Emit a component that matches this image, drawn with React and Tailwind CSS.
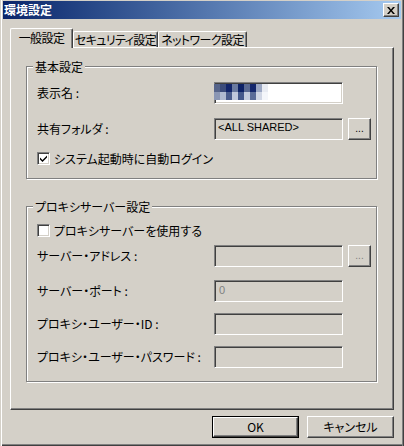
import React from "react";

const font =
  "font-['Noto_Sans_CJK_JP',sans-serif] [font-feature-settings:'palt']";
const sunken =
  "border border-t-[#808080] border-l-[#808080] border-b-white border-r-white shadow-[inset_1px_1px_#404040,inset_-1px_-1px_#d4d0c8]";
const raised =
  "border border-t-white border-l-white border-b-[#404040] border-r-[#404040] shadow-[inset_-1px_-1px_#808080]";
const etched =
  "relative border border-[#808080] shadow-[inset_1px_1px_#fff,1px_1px_#fff]";

const blur = [
  ["#56648a", "#3b4b7a", "#11246a", "#6a7aa0", "#0d2266", "#5a6a92", "#14276c", "#9aa6c2", "#e8ebf2"],
  ["#8a96b4", "#b0bad0", "#4a5c8c", "#c0c8dc", "#44588a", "#c4ccdd", "#5a6c98", "#d0d6e4", "#f4f6fa"],
];

const Field = ({ white, children }) => (
  <div
    className={`w-[129px] h-[22px] ${sunken} ${white ? "bg-white" : "bg-[#d4d0c8]"}`}
  >
    {children}
  </div>
);

const Dots = ({ disabled }) => (
  <button
    className={`ml-[5px] w-[23px] h-[22px] ${raised} bg-[#d4d0c8] flex items-end justify-center pb-[5px] font-['Liberation_Sans',sans-serif] text-[10px] leading-none ${disabled ? "text-[#808080]" : "text-black"}`}
  >
    ...
  </button>
);

const Row = ({ label, className, children }) => (
  <div className={`flex items-center h-[22px] ${className}`}>
    <span className="w-[177px] leading-none whitespace-nowrap">{label}</span>
    {children}
  </div>
);

const Check = ({ checked, label, className }) => (
  <div className={`flex items-center h-[13px] ${className}`}>
    <div
      className={`w-[13px] h-[13px] bg-white ${sunken} flex items-center justify-center`}
    >
      {checked && (
        <svg width="7" height="7" viewBox="0 0 7 7">
          <path d="M0 2.5 L2.5 5 L7 0.5 L7 2.5 L2.5 7 L0 4.5 Z" fill="#000" />
        </svg>
      )}
    </div>
    <span className="ml-[4px] leading-none whitespace-nowrap">{label}</span>
  </div>
);

const Group = ({ title, className, children }) => (
  <div className={`${etched} w-[351px] ${className}`}>
    <span className="absolute -top-[7px] left-[6px] px-[2px] bg-[#d4d0c8] leading-[13px] whitespace-nowrap">
      {title}
    </span>
    <div className="pl-[10px]">{children}</div>
  </div>
);

const Tab = ({ active, className, children }) => (
  <div
    className={`${className} shrink-0 whitespace-nowrap tracking-[-0.6px] flex items-center justify-center leading-none bg-[#d4d0c8] rounded-t-[2px] border-t border-l border-t-white border-l-white border-r border-r-[#404040] shadow-[inset_-1px_0_#808080] ${
      active ? "relative z-10 h-[20px] -mb-[1px] pb-[2px]" : "h-[16px]"
    }`}
  >
    {children}
  </div>
);

export default function App() {
  return (
    <div
      className={`w-[404px] h-[446px] bg-[#d4d0c8] flex flex-col text-[12px] text-black ${font} shadow-[inset_1px_0_#d4d0c8,inset_2px_0_#fff,inset_-1px_0_#404040,inset_-2px_0_#808080,inset_0_-1px_#404040,inset_0_-2px_#808080]`}
    >
      {/* Title bar */}
      <div className="mt-[1px] mx-[3px] h-[18px] flex items-center justify-between bg-linear-to-r from-[#0a246a] to-[#a6caf0] pl-[1px] pr-[2px]">
        <span className="text-white font-bold leading-none">環境設定</span>
        <button
          className={`w-[16px] h-[14px] ${raised} bg-[#d4d0c8] flex items-center justify-center`}
        >
          <svg width="8" height="7" viewBox="0 0 8 7">
            <path
              d="M0 0 H2 L4 2.5 L6 0 H8 L5 3.5 L8 7 H6 L4 4.5 L2 7 H0 L3 3.5 Z"
              fill="#000"
            />
          </svg>
        </button>
      </div>

      {/* Tabs */}
      <div className="mt-[9px] px-[10px] flex flex-col">
        <div className="flex items-end h-[19px]">
          <Tab active className="w-[63px]">一般設定</Tab>
          <Tab className="w-[85px]">セキュリティ設定</Tab>
          <Tab className="w-[89px]">ネットワーク設定</Tab>
        </div>

        <div className="h-[363px] border-t border-l border-t-white border-l-white border-r border-b border-r-[#404040] border-b-[#404040] shadow-[inset_-1px_-1px_#808080] pl-[15px]">
          <Group title="基本設定" className="mt-[18px] h-[113px]">
            <Row label="表示名 :" className="mt-[15px]">
              <Field white>
                <div className="mt-[1px] ml-[-1px] flex flex-col">
                  {blur.map((r, i) => (
                    <div key={i} className="flex h-[8px]">
                      {r.map((c, j) => (
                        <div
                          key={j}
                          className="w-[6px] h-full"
                          style={{ background: c }}
                        />
                      ))}
                    </div>
                  ))}
                </div>
              </Field>
            </Row>
            <Row label="共有フォルダ :" className="mt-[14px]">
              <Field>
                <div className="pl-[3px] pt-[2px] font-['Liberation_Sans',sans-serif] text-[11px] leading-[13px]">
                  &lt;ALL SHARED&gt;
                </div>
              </Field>
              <Dots />
            </Row>
            <Check checked label="システム起動時に自動ログイン" className="mt-[12px]" />
          </Group>

          <Group title="プロキシサーバー設定" className="mt-[27px] h-[176px]">
            <Check label="プロキシサーバーを使用する" className="mt-[17px]" />
            <Row label="サーバー・アドレス :" className="mt-[8px]">
              <Field />
              <Dots disabled />
            </Row>
            <Row label="サーバー・ポート :" className="mt-[13px]">
              <Field>
                <div className="pl-[4px] pt-[3px] font-['Liberation_Sans',sans-serif] text-[11px] leading-[13px] text-[#808080]">
                  0
                </div>
              </Field>
            </Row>
            <Row label="プロキシ・ユーザー・ID :" className="mt-[11px]">
              <Field />
            </Row>
            <Row label="プロキシ・ユーザー・パスワード :" className="mt-[11px]">
              <Field />
            </Row>
          </Group>
        </div>
      </div>

      {/* Buttons */}
      <div className="mt-[6px] px-[10px] flex justify-end gap-[8px]">
        <button className="w-[87px] h-[22px] border border-black bg-[#d4d0c8]">
          <div
            className={`w-full h-full ${raised} flex items-center justify-center leading-none`}
          >
            OK
          </div>
        </button>
        <button
          className={`w-[87px] h-[22px] ${raised} bg-[#d4d0c8] flex items-center justify-center leading-none`}
        >
          キャンセル
        </button>
      </div>
    </div>
  );
}
